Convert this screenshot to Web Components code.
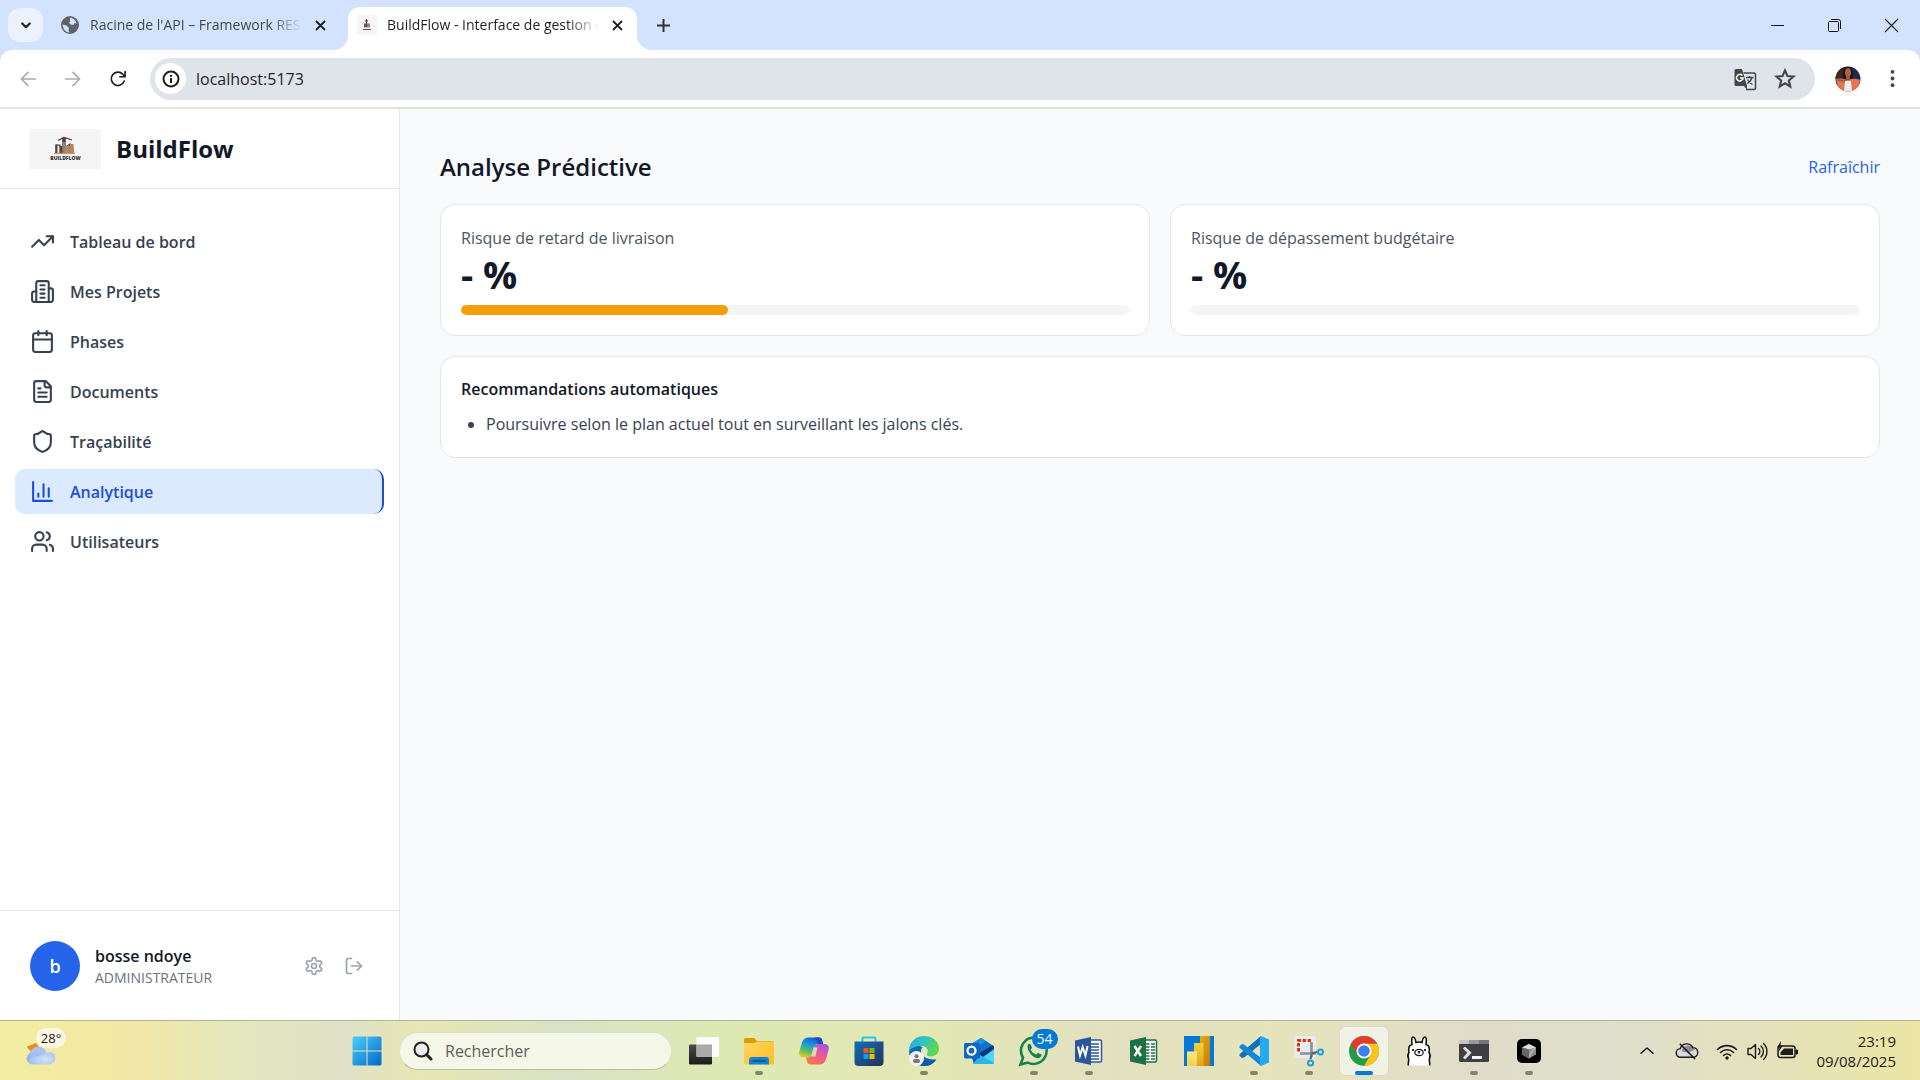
<!DOCTYPE html>
<html lang="fr">
<head>
<meta charset="utf-8">
<title>BuildFlow - Interface de gestion</title>
<style>
  html, body { margin: 0; height: 100%; }
  body {
    display: flex; flex-direction: column; overflow: hidden;
    font-family: "Open Sans", "Noto Sans", sans-serif;
    font-size: 16px; line-height: 24px; color: #111827; background: #f9fafb;
  }
</style>
</head>
<body>
<browser-chrome></browser-chrome>
<app-layout>
  <app-sidebar slot="sidebar"></app-sidebar>
  <predictive-page></predictive-page>
</app-layout>
<task-bar></task-bar>

<script>
const line = (body, width = 2) =>
  `<svg viewBox="0 0 24 24" fill="none" stroke="currentColor" stroke-width="${width}" stroke-linecap="round" stroke-linejoin="round">${body}</svg>`;
const art = (body, box = '0 0 30 30') => `<svg viewBox="${box}">${body}</svg>`;

const ICONS = {
  trend: line('<path d="m22 7-8.500 8.500-5-5L2 17"/><path d="M16 7h6v6"/>'),
  building: line('<path d="M6 22V4a2 2 0 0 1 2-2h8a2 2 0 0 1 2 2v18Z"/><path d="M6 12H4a2 2 0 0 0-2 2v6a2 2 0 0 0 2 2h2"/><path d="M18 9h2a2 2 0 0 1 2 2v9a2 2 0 0 1-2 2h-2"/><path d="M10 6h4M10 10h4M10 14h4M10 18h4"/>'),
  calendar: line('<path d="M8 2v4M16 2v4"/><rect width="18" height="18" x="3" y="4" rx="2"/><path d="M3 10h18"/>'),
  file: line('<path d="M15 2H6a2 2 0 0 0-2 2v16a2 2 0 0 0 2 2h12a2 2 0 0 0 2-2V7Z"/><path d="M14 2v4a2 2 0 0 0 2 2h4"/><path d="M10 9H8M16 13H8M16 17H8"/>'),
  shield: line('<path d="M20 13c0 5-3.500 7.500-7.660 8.950a1 1 0 0 1-.67-.01C7.500 20.500 4 18 4 13V6a1 1 0 0 1 1-1c2 0 4.500-1.200 6.240-2.720a1.170 1.170 0 0 1 1.520 0C14.510 3.810 17 5 19 5a1 1 0 0 1 1 1z"/>'),
  chart: line('<path d="M3 3v18h18"/><path d="M18 17V9M13 17V5M8 17v-3"/>'),
  users: line('<path d="M16 21v-2a4 4 0 0 0-4-4H6a4 4 0 0 0-4 4v2"/><circle cx="9" cy="7" r="4"/><path d="M22 21v-2a4 4 0 0 0-3-3.870"/><path d="M16 3.130a4 4 0 0 1 0 7.750"/>'),
  settings: line('<path d="M12.220 2h-.44a2 2 0 0 0-2 2v.18a2 2 0 0 1-1 1.730l-.43.25a2 2 0 0 1-2 0l-.15-.08a2 2 0 0 0-2.730.73l-.22.38a2 2 0 0 0 .73 2.730l.15.1a2 2 0 0 1 1 1.720v.51a2 2 0 0 1-1 1.740l-.15.09a2 2 0 0 0-.73 2.730l.22.38a2 2 0 0 0 2.730.73l.15-.08a2 2 0 0 1 2 0l.43.25a2 2 0 0 1 1 1.730V20a2 2 0 0 0 2 2h.44a2 2 0 0 0 2-2v-.18a2 2 0 0 1 1-1.730l.43-.25a2 2 0 0 1 2 0l.15.08a2 2 0 0 0 2.730-.73l.22-.39a2 2 0 0 0-.73-2.730l-.15-.08a2 2 0 0 1-1-1.740v-.5a2 2 0 0 1 1-1.740l.15-.09a2 2 0 0 0 .73-2.730l-.22-.38a2 2 0 0 0-2.730-.73l-.15.08a2 2 0 0 1-2 0l-.43-.25a2 2 0 0 1-1-1.730V4a2 2 0 0 0-2-2z"/><circle cx="12" cy="12" r="3"/>'),
  logout: line('<path d="M9 21H5a2 2 0 0 1-2-2V5a2 2 0 0 1 2-2h4"/><path d="m16 17 5-5-5-5"/><path d="M21 12H9"/>'),

  chevronDown: line('<path d="m7 10 5 5 5-5"/>', 3),
  close: art('<path d="m3 3 9 9m0-9-9 9" stroke="currentColor" stroke-width="1.800" fill="none"/>', '0 0 15 15'),
  plus: art('<path d="M7.500 1v13M1 7.500h13" stroke="currentColor" stroke-width="2" fill="none"/>', '0 0 15 15'),
  globe: art('<circle cx="10" cy="10" r="9" fill="#5f6368"/><path d="M10.500 2.500c2 .4 5.500 2.600 6 6l-2-.5-1 2-3-.5-1.500-2 1.500-1.200-.8-1.300zM2.500 9.500l4 1 2.500 2.500-.5 2 1 2.500c-3.500 0-6.500-3-7-8z" fill="#d3e3fd"/>', '0 0 20 20'),
  back: line('<path d="M21 12H4M12 4l-8 8 8 8"/>', 2),
  forward: line('<path d="M3 12h17M12 4l8 8-8 8"/>', 2),
  reload: line('<path d="M19.500 14.500a8 8 0 1 1-1.800-8.300L20.500 9"/><path d="M20.500 3v6.300h-6.300"/>', 2),
  info: art('<circle cx="10" cy="10" r="7.500" fill="none" stroke="#1f1f1f" stroke-width="2"/><path d="M10 9v5M10 6v1.800" stroke="#1f1f1f" stroke-width="2"/>', '0 0 20 20'),
  translate: art('<path d="M9.500 5H20a1.500 1.500 0 0 1 1.500 1.500V20a1.500 1.500 0 0 1-1.500 1.500h-8" fill="none" stroke="#444746" stroke-width="1.500"/><path d="M2 1h6l5 17H2a1.500 1.500 0 0 1-1.500-1.500v-14A1.500 1.500 0 0 1 2 1z" fill="#444746"/><path d="m9 17 4 4.500V17z" fill="#444746"/><path d="M8.300 7.500a3.300 3.300 0 1 0 .8 2.500H6" fill="none" stroke="#fff" stroke-width="1.500"/><path d="M12 9.500h7.500M15.500 8v1.500M18 9.500c-.8 3-3 5-5 6M13.500 11.500c1 2 3 4 5 5" fill="none" stroke="#444746" stroke-width="1.300"/>', '0 0 22 22'),
  star: art('<path d="m10 2.200 2.200 5.100 5.500.5-4.200 3.600 1.300 5.400-4.800-2.900-4.800 2.900 1.300-5.400-4.200-3.600 5.500-.5z" fill="none" stroke="#444746" stroke-width="1.900"/>', '0 0 20 20'),
  dots: art('<g fill="#444746"><circle cx="10" cy="3" r="2"/><circle cx="10" cy="10" r="2"/><circle cx="10" cy="17" r="2"/></g>', '0 0 20 20'),
  portrait: art('<clipPath id="c"><circle cx="13" cy="13" r="12.500"/></clipPath><g clip-path="url(#c)"><path fill="#1b2a4e" d="M0 0h26v26H0z"/><path fill="#43271f" d="M0 0h10v9L0 13z"/><path fill="#251715" d="M8 13c-1-8 0-12.500 5-12.500S18 5 18 13z"/><path fill="#e8744e" d="M1 13c5-1 8 0 12 1 4-1 6-2 12 0l-2 12H4z"/><ellipse cx="13" cy="6.500" rx="3" ry="4.300" fill="#a5664b"/><path fill="#9a5b42" d="M11 10h4v3l-2 1-2-1zM2 13l9 1v2l-8-1z"/><path fill="#eef0f6" d="M10 15h6l1 11H9z"/></g>', '0 0 26 26'),
  minimize: art('<path d="M1 7.500h13" stroke="#111" fill="none"/>', '0 0 15 15'),
  restore: art('<rect x="1.500" y="3.500" width="10" height="10" rx="1" fill="none" stroke="#111"/><path d="M4 1.500h7.500a2 2 0 0 1 2 2V11" fill="none" stroke="#111"/>', '0 0 15 15'),
  windowClose: art('<path d="m1 1 13 13M14 1 1 14" stroke="#222" stroke-width="1.200" fill="none"/>', '0 0 15 15'),

  start: art('<defs><linearGradient id="w" x2="1" y2="1"><stop stop-color="#4cd0fb"/><stop offset="1" stop-color="#0067c8"/></linearGradient></defs><path fill="url(#w)" d="M2 .5h12.500v14H.5V2A1.500 1.500 0 0 1 2 .5zM15.500.5H28A1.500 1.500 0 0 1 29.500 2v12.500h-14zM.5 15.500h14v14H2A1.500 1.500 0 0 1 .5 28zM15.500 15.500h14V28a1.500 1.500 0 0 1-1.500 1.500H15.500z"/>'),
  search: art('<circle cx="8.500" cy="8.500" r="7" fill="#eceef0" stroke="#222" stroke-width="2"/><path d="m13.500 13.500 4.500 4.500" stroke="#222" stroke-width="3" stroke-linecap="round"/>', '0 0 20 20'),
  taskview: art('<defs><linearGradient id="d" x2="0" y2="1"><stop stop-color="#4a4a4a"/><stop offset="1" stop-color="#1c1c1c"/></linearGradient></defs><rect x="0" y="8.500" width="23" height="20" rx="1" fill="url(#d)"/><rect x="7.500" y="1" width="22.500" height="20" rx="1" fill="#fff" opacity=".92"/><rect x="7.500" y="8.500" width="15.500" height="12.500" fill="#aaa"/>'),
  explorer: art('<defs><linearGradient id="f" x2="1" y2="1"><stop stop-color="#ffd863"/><stop offset="1" stop-color="#fdbc22"/></linearGradient></defs><path d="M0 3.500A1.500 1.500 0 0 1 1.500 2H10l3 3h15.500A1.500 1.500 0 0 1 30 6.500V10H0z" fill="#dc9a05"/><path d="M0 7h10l3-1.500h17V27a1.500 1.500 0 0 1-1.500 1.500h-27A1.500 1.500 0 0 1 0 27z" fill="url(#f)"/><path d="M5 28.500V24a3 3 0 0 1 3-3h14a3 3 0 0 1 3 3v4.500z" fill="#1282d6"/><path d="M9 25h12" stroke="#064f91" stroke-width="1.500" stroke-linecap="round"/>'),
  copilot: art('<defs><linearGradient id="a" x1=".6" x2=".2" y2="1"><stop stop-color="#1658d6"/><stop offset=".4" stop-color="#18a0dd"/><stop offset=".7" stop-color="#64bf57"/><stop offset="1" stop-color="#efcc25"/></linearGradient><linearGradient id="b" x1=".8" x2=".3" y2="1"><stop stop-color="#a653e6"/><stop offset=".5" stop-color="#e95a93"/><stop offset="1" stop-color="#f9794b"/></linearGradient></defs><path fill="url(#a)" d="M10 1.500h10c2 0 3 1.500 3.500 4L24 8h-5c-2.500 0-3.500 1.500-4 3.500l-2 7c-.7 2-2 3-4 3H4.500C1 21.500-.7 19 .3 15.500L3 6.500c1-3.500 3.500-5 7-5z"/><path fill="url(#b)" d="M20.500 28.500h-9c-2 0-3.200-1.500-3.700-4L7 21.500h2c2.500 0 3.500-1.500 4-3.500l2-6.500c.7-2.500 2-3.500 4-3.500h6.500c3.500 0 5 2.500 4 6l-2.500 9c-1 3.500-3 5.500-6.500 5.500z"/><path fill="#1d49c4" d="M16 1.500h4c2 0 3 1.500 3.500 4L24 8h-5l-1-3z"/><path fill="#e3e7c0" d="m14.500 11.500h4l-2 9h-4.300z" opacity=".85"/>'),
  store: art('<defs><linearGradient id="s" x2="1" y2="1"><stop stop-color="#0f6fb8"/><stop offset="1" stop-color="#263258"/></linearGradient></defs><path d="M8.500 7V2.500a1 1 0 0 1 1-1h11a1 1 0 0 1 1 1V7" fill="none" stroke="#26c3f0" stroke-width="2"/><path d="M.5 5.500h29V26a4 4 0 0 1-4 4h-21a4 4 0 0 1-4-4z" fill="url(#s)"/><path fill="#f25022" d="M9.500 12h5v5h-5z"/><path fill="#7fba00" d="M15.500 12h5v5h-5z"/><path fill="#00a4ef" d="M9.500 18h5v5h-5z"/><path fill="#ffb900" d="M15.500 18h5v5h-5z"/>'),
  edge: art('<defs><linearGradient id="e" x2="1" y2=".4"><stop stop-color="#27a8e3"/><stop offset=".5" stop-color="#2fc3c4"/><stop offset="1" stop-color="#62d64f"/></linearGradient></defs><path d="M1 13C1 10 9 6 14 12c-5 6 2 12 13.500 11.500C24 28 20 30 15 30 7 30 0 24 0 15z" fill="#0d6bb5"/><path d="M0 15C0 6 7 0 15 0c9 0 15 6 15 12.500 0 5-4 8-8 8-3 0-5-1-4-3 2-3 0-7.500-6-7.500-5 0-10 2-12 5z" fill="url(#e)"/><path d="M10 14c-2 8 5 13 17 9.500C24 28 20 30 15 30c-6 0-9-6-9-10s2-6 4-6z" fill="#0c59a4"/><path d="M13 11.500c4 0 6 3.500 5 6-.5 1-.5 2 1 2.800C15 22 10 17 13 11.500z" fill="#e5e9bb"/><circle cx="7.500" cy="22.500" r="7.500" fill="#f1f2f3"/><circle cx="7.500" cy="20.200" r="2" fill="#777"/><rect x="4" y="23" width="7" height="4" rx="2" fill="#777"/>'),
  outlook: art('<path d="M4 10 17 2l13 9v15a2 2 0 0 1-2 2H10z" fill="#0a5fb4"/><path d="m5 9 12-7 5 3-13 9z" fill="#1b92dd"/><path d="m22 5 6 4-16 12-3-7z" fill="#1473cf"/><path d="m29 9 1 2v5L14 22v-4z" fill="#06367f"/><path d="m30 13v13a2 2 0 0 1-2 2H10z" fill="#4fd4f6"/><path d="m16 19 14 8-2 1H9z" fill="#2cb4ea"/><rect y="7" width="16" height="15.500" rx="1.500" fill="#1067c1"/><circle cx="7.500" cy="14.700" r="4" fill="none" stroke="#fff" stroke-width="2.300"/>'),
  whatsapp: art('<path d="M15.300 1.500A13.200 13.200 0 0 0 4 21.600L1.500 28.500l7.300-1.900A13.200 13.200 0 1 0 15.300 1.500z" fill="none" stroke="#13834d" stroke-width="2.600"/><path d="M8.500 9.500c.6-2 2.300-2 3-1.200l1.500 3.300c-.2 1-1.300 1.600-1.300 2.200.8 2 3.300 4.200 5.300 4.700.8-.3 1.400-1.700 2.200-1.500l3.300 1.500c.4 1.500-1 3.500-3.500 3.800-5 0-11-7-10.500-12.800z" fill="#13834d"/>'),
  word: art('<path d="M15 4h11a1.500 1.500 0 0 1 1.500 1.500v19A1.500 1.500 0 0 1 26 26H15z" fill="#fff" stroke="#2b5797" stroke-width="1.500"/><path d="M17 8h8M17 11h8M17 14h8M17 17h8M17 20h8M17 23h8" stroke="#2b5797" stroke-width="1.500"/><path d="m1 4.500 16-3.500v28L1 25.500z" fill="#2b579a"/><path d="m4 10.500 2 9 2.700-8.500 2.700 8.500 2.200-9.500" fill="none" stroke="#fff" stroke-width="2"/>'),
  excel: art('<path d="M15 4h11a1.500 1.500 0 0 1 1.500 1.500v19A1.500 1.500 0 0 1 26 26H15z" fill="#fff" stroke="#1e7145" stroke-width="1.500"/><path d="M17 8h3.500M22 8h4M17 11h3.500M22 11h4M17 14h3.500M22 14h4M17 17h3.500M22 17h4M17 20h3.500M22 20h4M17 23h3.500M22 23h4" stroke="#1e7145" stroke-width="1.500"/><path d="m1 4.500 16-3.500v28L1 25.500z" fill="#1e7145"/><path d="m5.500 10 6.500 10M12 10 5.500 20" fill="none" stroke="#fff" stroke-width="2.400"/>'),
  powerbi: art('<defs><linearGradient id="p" x2="1" y2="1"><stop stop-color="#e8ad17"/><stop offset="1" stop-color="#c27a08"/></linearGradient><linearGradient id="q" x2="0" y2="1"><stop stop-color="#f7d040"/><stop offset="1" stop-color="#e3a317"/></linearGradient><linearGradient id="r" x2="0" y2="1"><stop stop-color="#faea87"/><stop offset="1" stop-color="#f4cf45"/></linearGradient></defs><path fill="#0578d6" d="M0 0h30v30H0z"/><path fill="url(#p)" d="M16 0h10v30H16z"/><path fill="url(#q)" d="M10 7h9.500v23H10z"/><path fill="url(#r)" d="M3 15.500h10V30H3z"/>'),
  vscode: art('<path d="M22 0v8L5 21.500 3 22 .5 19.700v-1.500z" fill="#0a72b8"/><path d="M22 30v-8L5 8.500 3 8 .5 10.300v1.500z" fill="#1289d4"/><path d="M22 0 30 3.500v23L22 30l-1-1V1z" fill="#26a9f3"/>'),
  snip: art('<rect width="22" height="22" rx="3" fill="#e8ebef"/><path d="M17 4.500H4.500V16" fill="none" stroke="#d83b01" stroke-width="3" stroke-dasharray="3.500 1.500"/><path d="M17.500 6v15M6 17.500h16" stroke="#8a9096" stroke-width="2.600"/><path d="m17 18 2-1 4-1M17.500 19l-1 4" stroke="#5b636b" stroke-width="2"/><circle cx="26.500" cy="16" r="2.500" fill="none" stroke="#1a9fe0" stroke-width="2"/><circle cx="16.500" cy="27" r="2.500" fill="none" stroke="#1a9fe0" stroke-width="2"/>'),
  chrome: art('<circle cx="15" cy="15" r="15" fill="#249c49"/><path d="M15 7.500h13A15 15 0 0 1 15 30l6.500-11.200z" fill="#fcc31e"/><path d="M2 7.500A15 15 0 0 1 28 7.500H15v7.500l-6.500 3.800z" fill="#e33b2e"/><circle cx="15" cy="15" r="7.500" fill="#fff"/><circle cx="15" cy="15" r="5.800" fill="#3b7ded"/>'),
  ollama: art('<path d="M4.500 29.500c-1-3 1-5 0-7s-1-4 .5-6c-1-5 1-7.500 3-8C7.500 4 7.500 1 9 1s2.500 2.500 3 5.500c2-.7 4-.7 6 0 .5-3 1.500-5.500 3-5.500s1.500 3 1 7.500c2 .5 4 3 3 8 1.500 2 1.500 4 .5 6s1 4 0 7z" fill="#fff"/><path d="M4.500 29.500c-1-3 1-5 0-7s-1-4 .5-6c-1-5 1-7.500 3-8C7.500 4 7.500 1 9 1s2.500 2.500 3 5.500c2-.7 4-.7 6 0 .5-3 1.500-5.500 3-5.500s1.500 3 1 7.500c2 .5 4 3 3 8 1.500 2 1.500 4 .5 6s1 4 0 7" fill="none" stroke="#111" stroke-width="1.600"/><ellipse cx="15" cy="16.500" rx="4.200" ry="3.200" fill="#fff" stroke="#111" stroke-width="1.200"/><path d="M14 15.500h2l-1 1zM15 16v2" stroke="#111"/><circle cx="9" cy="14" r="1.100"/><circle cx="21" cy="14" r="1.100"/>'),
  terminal: art('<path fill="#3f3f41" d="M0 4h30v20.500A1.500 1.500 0 0 1 28.500 26h-27A1.500 1.500 0 0 1 0 24.500z"/><path fill="#c4c4c4" d="M0 4h10v4H0z"/><path fill="#989898" d="M10 4h10v4H10z"/><path fill="#757575" d="M20 4h10v4H20z"/><path d="m5 11.500 5.500 5.300L5 22.500" fill="none" stroke="#ddd" stroke-width="3"/><path d="M13 21.500h10" stroke="#f4f4f4" stroke-width="3"/>'),
  cursor: art('<defs><linearGradient id="u" x2="1" y2="1"><stop stop-color="#777"/><stop offset="1" stop-color="#f5f5f5"/></linearGradient></defs><rect x="3" y="3" width="24" height="24" rx="5"/><path d="m15 8 7 3.500v7L15 22.500l-7-4v-7z" fill="#8a8a8a"/><path d="m8 11.500 7-3.500 7 3.500-7 2z" fill="#ddd"/><path d="m22 11.500-7 11v-9z" fill="url(#u)"/><path d="m8 11.500 7 2v9l-7-4z" fill="#666"/>'),
  weather: art('<defs><linearGradient id="g" x2="0" y2="1"><stop stop-color="#a9c8f4"/><stop offset="1" stop-color="#7fa3e3"/></linearGradient><radialGradient id="h" cx=".65" cy=".7" r=".5"><stop stop-color="#d4e4fa"/><stop offset="1" stop-color="#a5c2f1"/></radialGradient></defs><path d="m0 4 10-4 5 8-8 4z" fill="#ee8a1d"/><path d="M3 11C4 7 8 4 12 4c5 0 8 3 8.500 6.500C26 8 30 11 30 16c0 4-3 6.500-7 6.500H7C2.500 22.500 0 20 0 16.500 0 14 1 12 3 11z" fill="url(#h)"/><path d="M0 16c0-4 4-7 8.500-5.500 3-.5 4-3 7-3 3.500 0 5 2 5 4-5 0-6 3-12 2.500-4 0-6 3-6 6C1 19 0 18 0 16z" fill="url(#g)" opacity=".6"/>', '0 0 30 23'),

  up: line('<path d="m4 15 8-7 8 7"/>', 2),
  cloudOff: art('<path d="M5 18a4.500 4.500 0 0 1-.5-9A7 7 0 0 1 17.500 8a5 5 0 0 1 .5 10z" fill="#d9d9d9"/><path d="M6 12a7 7 0 0 1 11-5l3 3-7 3z" fill="#8d8d92"/><path d="M5 18a4.500 4.500 0 0 1-.5-9A7 7 0 0 1 17.500 8a5 5 0 0 1 .5 10z" fill="none" stroke="#1c1c1c" stroke-width="1.500"/><path d="m4 4 16 16" stroke="#1c1c1c" stroke-width="1.500"/>', '0 0 23 23'),
  wifi: art('<g fill="none" stroke="#1c1c1c" stroke-width="1.600" stroke-linecap="round"><path d="M1.500 9.500a13.500 13.500 0 0 1 19 0M4.500 12.500a9.200 9.200 0 0 1 13 0M7.500 15.500a5 5 0 0 1 7 0"/></g><circle cx="11" cy="18" r="1.700" fill="#1c1c1c"/>', '0 0 22 22'),
  sound: art('<g fill="none" stroke="#1c1c1c" stroke-width="1.400" stroke-linecap="round" stroke-linejoin="round"><path d="M2 8.500h3L9.500 4.500v14L5 14.500H2z"/><path d="M12.500 8.500a4 4 0 0 1 0 6M15 6a7.500 7.500 0 0 1 0 11M17.500 3.500a11 11 0 0 1 0 16"/></g>', '0 0 22 22'),
  battery: art('<rect x="2" y="6" width="17" height="11.500" rx="2.500" fill="none" stroke="#1c1c1c" stroke-width="1.500"/><path d="M4.500 15v-2.500L8 8.500h9V15z" fill="#1c1c1c"/><path d="M20 10h1.500v4H20z" fill="#1c1c1c" stroke="#1c1c1c"/><path d="M5 1 1 7.500h2.500L2.500 12 7 5.500H4.500z" fill="#1c1c1c"/>', '0 0 22 22'),

  brand: art('<path fill="#f5f5f5" d="M0 0h71v40H0z"/><g fill="none" stroke="#4b3732" stroke-width="1.200"><path d="M33 24V9M35 24V9M28 11.500l6-3 8 2.500"/><path d="M26 24v-8h4v8M31 24v-6M37 24v-7l3-2v9"/></g><path fill="#574640" d="M32.500 8h3v5h-3zM25.500 15.500h2V24h-2zM30 17h2.500v7H30z"/><path fill="#b98560" d="m35 18 4-2v8h-4zM40 15h3.500l.8 9H40z"/><path stroke="#c9956c" stroke-width="1.200" d="M24 24.500h21"/>', '0 0 71 40'),
  favicon: art('<path fill="#f5f5f5" d="M0 0h20v20H0z"/><path d="M9.500 4v8M8 6h3" stroke="#4b3732" stroke-width="1"/><path fill="#6b5a53" d="M7 8.500h2.500v4H7z"/><path fill="#a97c60" d="M10 8.500h3v4h-3z"/><path stroke="#555" d="M6 14.500h8"/>', '0 0 20 20'),
};

const define = (name, html, setup) => {
  const template = document.createElement('template');
  template.innerHTML = html;
  customElements.define(name, class extends HTMLElement {
    connectedCallback() {
      if (this.shadowRoot) return;
      this.attachShadow({ mode: 'open' }).append(template.content.cloneNode(true));
      if (setup) setup(this, this.shadowRoot);
    }
  });
};

const makeIcon = name => {
  const icon = document.createElement('ui-icon');
  icon.setAttribute('name', name);
  return icon;
};

const RESET = `
  *, *::before, *::after { box-sizing: border-box; }
  button, input { font: inherit; color: inherit; border: 0; background: none; padding: 0; margin: 0; outline: 0; }
  a { color: inherit; text-decoration: none; }
  button { display: inline-flex; align-items: center; justify-content: center; cursor: pointer; }`;

define('ui-icon', `<style>
  :host { display: inline-flex; flex: none; width: 20px; height: 20px; }
  svg { display: block; width: 100%; height: 100%; overflow: visible; }
</style>`, (el, root) => {
  const holder = document.createElement('template');
  holder.innerHTML = ICONS[el.getAttribute('name')];
  holder.content.firstElementChild.setAttribute('aria-hidden', 'true');
  root.append(holder.content);
});

define('browser-tab', `<style>${RESET}
  :host { display: flex; align-items: center; gap: 10px; height: 43px; padding: 0 12px 7px 13px; position: relative; font-size: 14px; color: #474747; }
  :host([active]) { background: #fff; border-radius: 12px 12px 0 0; color: #1f1f1f; padding-left: 9px; }
  :host([active])::before, :host([active])::after {
    content: ""; position: absolute; bottom: 0; width: 15px; height: 15px;
    background: radial-gradient(circle at 0 0, transparent 15px, #fff 15px);
  }
  :host([active])::before { right: 100%; }
  :host([active])::after { left: 100%; background: radial-gradient(circle at 100% 0, transparent 15px, #fff 15px); }
  span { flex: 1; overflow: hidden; white-space: nowrap; line-height: 20px;
    -webkit-mask-image: linear-gradient(90deg, #000 calc(100% - 32px), transparent); mask-image: linear-gradient(90deg, #000 calc(100% - 32px), transparent); }
  button { width: 16px; height: 16px; color: #1f1f1f; }
  button ui-icon { width: 15px; height: 15px; }
</style>
<slot name="icon"></slot><span><slot></slot></span><button aria-label="Fermer l'onglet"><ui-icon name="close"></ui-icon></button>`);

define('browser-chrome', `<style>${RESET}
  :host { display: block; flex: none; background: #d3e3fd; border-bottom: 2px solid #e1e3e1; }
  .strip { display: flex; align-items: flex-end; height: 50px; }
  .list { align-self: center; width: 35px; height: 34px; margin: 0 4px 0 8px; border-radius: 12px; background: #ebf2fe; color: #1f1f1f; }
  .list ui-icon { width: 18px; height: 18px; }
  browser-tab { width: 289px; }
  browser-tab:not([active]) { width: 301px; padding-right: 20px; }
  .new { width: 52px; height: 43px; padding-bottom: 7px; color: #333; }
  .new ui-icon { width: 15px; height: 15px; }
  .window { display: flex; margin-left: auto; align-self: stretch; }
  .window button { width: 57px; }
  .window ui-icon { width: 15px; height: 15px; }
  .bar { display: flex; align-items: center; height: 57px; background: #fff; border-radius: 12px 12px 0 0; padding: 0 5px; }
  .nav { display: flex; }
  .nav button { width: 45px; height: 40px; color: #1f1f1f; }
  .nav button:disabled { color: #a9abae; }
  .address { flex: 1; display: flex; align-items: center; height: 42px; margin-left: 10px; padding: 0 10px 0 5px; border-radius: 21px; background: #dfe4eb; }
  .site { width: 31px; height: 31px; border-radius: 50%; background: #fff; }
  .address input { flex: 1; margin-left: 10px; font-size: 16px; line-height: 24px; color: #1f1f1f; }
  .address .act { width: 40px; height: 40px; }
  .address .act ui-icon[name=translate] { width: 22px; height: 22px; }
  .address .act ui-icon[name=star] { width: 22px; height: 22px; }
  .user { width: 45px; height: 40px; margin-left: 10px; }
  .user ui-icon { width: 26px; height: 26px; }
  .menu { width: 45px; height: 40px; }
  .menu ui-icon { width: 19px; height: 19px; }
</style>
<div class="strip">
  <button class="list" aria-label="Rechercher dans les onglets"><ui-icon name="chevronDown"></ui-icon></button>
  <browser-tab><ui-icon slot="icon" name="globe"></ui-icon>Racine de l'API – Framework REST Django</browser-tab>
  <browser-tab active><ui-icon slot="icon" name="favicon"></ui-icon>BuildFlow - Interface de gestion de projets</browser-tab>
  <button class="new" aria-label="Nouvel onglet"><ui-icon name="plus"></ui-icon></button>
  <div class="window">
    <button aria-label="Réduire"><ui-icon name="minimize"></ui-icon></button>
    <button aria-label="Restaurer"><ui-icon name="restore"></ui-icon></button>
    <button aria-label="Fermer"><ui-icon name="windowClose"></ui-icon></button>
  </div>
</div>
<div class="bar">
  <div class="nav">
    <button disabled aria-label="Précédent"><ui-icon name="back"></ui-icon></button>
    <button disabled aria-label="Suivant"><ui-icon name="forward"></ui-icon></button>
    <button aria-label="Actualiser"><ui-icon name="reload"></ui-icon></button>
  </div>
  <div class="address">
    <button class="site" aria-label="Informations sur le site"><ui-icon name="info"></ui-icon></button>
    <input type="text" aria-label="Adresse" value="localhost:5173">
    <button class="act" aria-label="Traduire"><ui-icon name="translate"></ui-icon></button>
    <button class="act" aria-label="Ajouter aux favoris"><ui-icon name="star"></ui-icon></button>
  </div>
  <button class="user" aria-label="Profil"><ui-icon name="portrait"></ui-icon></button>
  <button class="menu" aria-label="Menu"><ui-icon name="dots"></ui-icon></button>
</div>`);

define('app-layout', `<style>
  :host { display: flex; flex: 1; min-height: 0; }
</style>
<slot name="sidebar"></slot><slot></slot>`);

define('nav-item', `<style>${RESET}
  :host { display: block; }
  a { display: flex; align-items: center; gap: 15px; height: 45px; padding: 0 15px; border-radius: 10px; font-weight: 600; color: #374151; }
  :host([active]) a { background: #dbeafe; color: #1d4ed8; border-right: 2px solid #1d4ed8; }
  ui-icon { width: 25px; height: 25px; }
</style>
<a href="#"><slot></slot></a>`, (el, root) => {
  const link = root.querySelector('a');
  link.prepend(makeIcon(el.getAttribute('icon')));
  if (el.hasAttribute('active')) link.setAttribute('aria-current', 'page');
});

define('app-sidebar', `<style>${RESET}
  :host { display: flex; flex-direction: column; flex: none; box-sizing: border-box; width: 400px; background: #fff; border-right: 1px solid #e5e7eb; }
  header { display: flex; align-items: center; gap: 15px; height: 80px; padding: 0 30px; border-bottom: 1px solid #e5e7eb; }
  .logo { position: relative; display: block; width: 71px; height: 40px; }
  .logo ui-icon { width: 71px; height: 40px; }
  .logo b { position: absolute; inset: auto 0 8px; text-align: center; font-size: 5px; line-height: 6px; font-weight: 800; color: #333; }
  header strong { font-size: 24px; line-height: 32px; font-weight: 700; color: #111827; }
  nav { flex: 1; display: flex; flex-direction: column; gap: 5px; padding: 30px 15px; }
  footer { display: flex; align-items: center; gap: 15px; height: 110px; padding: 0 25px 0 30px; border-top: 1px solid #e5e7eb; }
  .avatar { display: grid; place-items: center; width: 50px; height: 50px; border-radius: 50%; background: #2563eb; color: #fff; font-size: 18px; font-weight: 600; }
  .who { flex: 1; display: flex; flex-direction: column; }
  .who b { font-weight: 600; color: #111827; }
  .who small { font-size: 14px; line-height: 20px; color: #6b7280; }
  .acts { display: flex; color: #9ca3af; }
  .acts button { width: 40px; height: 40px; }
</style>
<header><span class="logo"><ui-icon name="brand"></ui-icon><b>BUILDFLOW</b></span><strong>BuildFlow</strong></header>
<nav aria-label="Navigation principale">
  <nav-item icon="trend">Tableau de bord</nav-item>
  <nav-item icon="building">Mes Projets</nav-item>
  <nav-item icon="calendar">Phases</nav-item>
  <nav-item icon="file">Documents</nav-item>
  <nav-item icon="shield">Traçabilité</nav-item>
  <nav-item icon="chart" active>Analytique</nav-item>
  <nav-item icon="users">Utilisateurs</nav-item>
</nav>
<footer>
  <span class="avatar">b</span>
  <div class="who"><b>bosse ndoye</b><small>ADMINISTRATEUR</small></div>
  <div class="acts">
    <button aria-label="Paramètres"><ui-icon name="settings"></ui-icon></button>
    <button aria-label="Déconnexion"><ui-icon name="logout"></ui-icon></button>
  </div>
</footer>`);

define('ui-card', `<style>
  :host { display: block; padding: 20px; border: 1px solid #e5e7eb; border-radius: 15px; background: #fff; }
</style><slot></slot>`);

define('risk-card', `<style>${RESET}
  :host { display: block; }
  .label { line-height: 26px; color: #4b5563; }
  .value { font-size: 38px; line-height: 46px; font-weight: 700; color: #111827; }
  .track { height: 10px; margin-top: 8px; border-radius: 5px; background: #f3f4f6; overflow: hidden; }
  .fill { height: 100%; border-radius: 5px; background: #f59e0b; }
</style>
<ui-card>
  <div class="label"><slot></slot></div>
  <div class="value">- %</div>
  <div class="track" role="progressbar"><div class="fill"></div></div>
</ui-card>`, (el, root) => {
  const level = el.getAttribute('level') || '0';
  root.querySelector('.track').setAttribute('aria-valuenow', level);
  root.querySelector('.track').setAttribute('aria-label', el.textContent);
  root.querySelector('.fill').style.width = level + '%';
});

define('predictive-page', `<style>${RESET}
  :host { display: flex; flex-direction: column; gap: 20px; flex: 1; min-width: 0; padding: 40px; }
  header { display: flex; align-items: center; justify-content: space-between; height: 35px; }
  h1 { margin: 0; font-size: 24px; line-height: 32px; font-weight: 600; color: #111827; }
  header button { color: #2563eb; }
  .risks { display: grid; grid-template-columns: 1fr 1fr; gap: 20px; }
  h2 { margin: 0 0 10px; font-size: 16px; line-height: 25px; font-weight: 600; color: #111827; }
  ul { margin: 0; padding-left: 25px; line-height: 25px; color: #374151; }
</style>
<header><h1>Analyse Prédictive</h1><button>Rafraîchir</button></header>
<div class="risks">
  <risk-card level="40">Risque de retard de livraison</risk-card>
  <risk-card level="0">Risque de dépassement budgétaire</risk-card>
</div>
<ui-card>
  <h2>Recommandations automatiques</h2>
  <ul><li>Poursuivre selon le plan actuel tout en surveillant les jalons clés.</li></ul>
</ui-card>`);

define('task-app', `<style>${RESET}
  :host { display: flex; justify-content: center; width: 55px; }
  button { position: relative; width: 48px; height: 48px; border-radius: 5px; }
  :host([active]) button { background: #f1f2e6; box-shadow: 0 0 1px #b9baa8; }
  ui-icon { width: 30px; height: 30px; }
  :host([open]) button::after { content: ""; position: absolute; left: 20px; bottom: 0; width: 8px; height: 4px; border-radius: 2px; background: #85856d; }
  :host([active]) button::after { left: 15px; width: 18px; background: #0078d4; }
  .badge { position: absolute; right: 0; top: 2px; min-width: 26px; height: 20px; border-radius: 10px; background: #0078d4; color: #fff; font-size: 14px; line-height: 20px; text-align: center; }
</style>
<button></button>`, (el, root) => {
  const button = root.querySelector('button');
  button.setAttribute('aria-label', el.getAttribute('label'));
  button.append(makeIcon(el.getAttribute('icon')));
  if (el.hasAttribute('badge')) {
    const badge = document.createElement('span');
    badge.className = 'badge';
    badge.textContent = el.getAttribute('badge');
    button.append(badge);
  }
});

define('task-bar', `<style>${RESET}
  :host { display: flex; align-items: center; flex: none; box-sizing: border-box; height: 60px; border-top: 1px solid #b3b597;
    background: linear-gradient(90deg, #f3eea0 0, #f2e7a6 7%, #e3e8bd 12%, #e1e2c8 18%, #e6e7b2 22%, #d9e2c6 29%, #dee9b2 38%, #e3e8b5 48%, #e2e0c0 58%, #e5e4bb 66%, #dfddca 77%, #dedfcc 84%, #e4e1bb 92%, #ebe6a4 100%); }
  .weather { flex: 0 1 339px; padding-left: 26px; }
  .weather button { position: relative; width: 40px; height: 40px; align-items: flex-end; justify-content: flex-start; }
  .weather ui-icon { width: 30px; height: 22px; margin-bottom: 5px; }
  .temp { position: absolute; left: 10px; top: -2px; height: 20px; min-width: 30px; border-radius: 10px; background: #faf6e3; font-size: 13px; line-height: 20px; color: #222; text-align: center; }
  .search { display: flex; align-items: center; gap: 12px; width: 273px; height: 38px; margin: 0 4px 0 5px; padding: 0 13px; border-radius: 19px; background: #f5f7e9; border: 1px solid #dde0c4; border-bottom-color: #b9bda0; }
  .search input { flex: 1; min-width: 0; line-height: 24px; }
  .search input::placeholder { color: #5f6058; opacity: 1; }
  .tray { display: flex; align-items: center; margin-left: auto; padding-right: 24px; }
  .tray button { width: 30px; height: 40px; }
  .tray .wide { width: 40px; }
  .tray ui-icon { width: 22px; height: 22px; }
  .tray ui-icon[name=up] { width: 18px; height: 18px; }
  .gap { margin-right: 5px; }
  time { margin-left: 14px; text-align: right; font-size: 15px; line-height: 20px; color: #1c1c1c; }
</style>
<div class="weather"><button aria-label="Météo"><ui-icon name="weather"></ui-icon><span class="temp">28°</span></button></div>
<task-app icon="start" label="Démarrer"></task-app>
<label class="search"><ui-icon name="search"></ui-icon><input type="search" placeholder="Rechercher" aria-label="Rechercher"></label>
<task-app icon="taskview" label="Vue des tâches"></task-app>
<task-app icon="explorer" label="Explorateur" open></task-app>
<task-app icon="copilot" label="Copilot"></task-app>
<task-app icon="store" label="Store"></task-app>
<task-app icon="edge" label="Edge" open></task-app>
<task-app icon="outlook" label="Outlook"></task-app>
<task-app icon="whatsapp" label="WhatsApp" badge="54" open></task-app>
<task-app icon="word" label="Word" open></task-app>
<task-app icon="excel" label="Excel"></task-app>
<task-app icon="powerbi" label="Power BI"></task-app>
<task-app icon="vscode" label="Visual Studio Code" open></task-app>
<task-app icon="snip" label="Capture d'écran" open></task-app>
<task-app icon="chrome" label="Chrome" open active></task-app>
<task-app icon="ollama" label="Ollama"></task-app>
<task-app icon="terminal" label="Terminal" open></task-app>
<task-app icon="cursor" label="Cursor" open></task-app>
<div class="tray">
  <button class="wide" aria-label="Icônes cachées"><ui-icon name="up"></ui-icon></button>
  <button class="wide gap" aria-label="OneDrive"><ui-icon name="cloudOff"></ui-icon></button>
  <button aria-label="Wi-Fi"><ui-icon name="wifi"></ui-icon></button>
  <button aria-label="Volume"><ui-icon name="sound"></ui-icon></button>
  <button aria-label="Batterie"><ui-icon name="battery"></ui-icon></button>
  <time datetime="2025-08-09T23:19">23:19<br>09/08/2025</time>
</div>`);
</script>
</body>
</html>
